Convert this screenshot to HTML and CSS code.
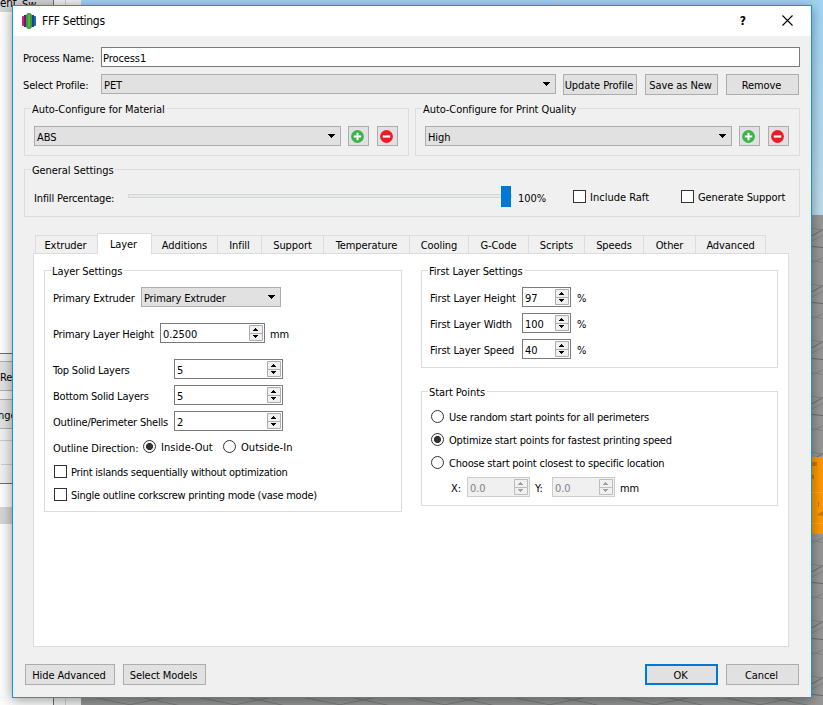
FILE: index.html
```
<!DOCTYPE html>
<html lang="en">
<head>
<meta charset="utf-8">
<title>FFF Settings</title>
<link rel="stylesheet" href="styles.css">
</head>
<body>
<svg width="0" height="0" class="defs">
  <symbol id="plus" viewBox="0 0 14 14"><circle cx="7" cy="7" r="6.900" fill="#39b54a"/><path d="M7 3v8M3 7h8" stroke="#fff" stroke-width="2.2"/></symbol>
  <symbol id="minus" viewBox="0 0 14 14"><circle cx="7" cy="7" r="6.900" fill="#ed1c24"/><path d="M3 7h8" stroke="#fff" stroke-width="2.4"/></symbol>
  <symbol id="down" viewBox="0 0 7 4"><path d="M0 0h7v1h-1v1h-1v1h-1v1h-1v-1h-1v-1h-1v-1h-1z" shape-rendering="crispEdges"/></symbol>
  <symbol id="arrows" viewBox="0 0 14 16"><path d="M.5.5h13v15h-13zM1 8.5h12" fill="#f0f0f0" stroke="#adadad"/><path d="M4 6h5v-1h-1v-1h-1v-1h-1v1h-1v1h-1zM4 10h5v1h-1v1h-1v1h-1v-1h-1v-1h-1z" fill="currentColor" shape-rendering="crispEdges"/></symbol>
</svg>

<svg class="scene" width="823" height="705" viewBox="0 0 823 705">
  <defs>
    <linearGradient id="sky" x1="0" y1="0" x2="0" y2="1"><stop offset="0" stop-color="#a2d5f5"/><stop offset="1" stop-color="#bedcec"/></linearGradient>
    <pattern id="grid" width="44" height="56" patternUnits="userSpaceOnUse" x="800" y="216"><path d="M0 31L44 9M0 53L44 31M0 10L44 18M0 42L44 51" stroke="#848484" fill="none"/><path d="M0 27L44 1M0 29L44 34" stroke="#6a6a6a" fill="none"/></pattern>
    <pattern id="floor" width="105" height="24" patternUnits="userSpaceOnUse" x="81" y="695"><path d="M0 0L105 21M0 20L105 -2M50 0L105 12" stroke="#7c7c7c" fill="none"/></pattern>
  </defs>
  <path fill="#fcfcfc" d="M0 0h81v705H0z"/>
  <path fill="url(#sky)" d="M81 0h742v216H81z"/>
  <path fill="#979797" d="M81 215h742v490H81z"/>
  <path fill="url(#grid)" d="M812 216h11v489h-11z"/>
  <path fill="url(#floor)" d="M81 698h742v7H81z"/>
  <path fill="#f1f1f1" d="M54 0h27v5H54zM54 698h27v7H54z"/>
  <path fill="#d5d5d5" d="M0 0h53v12H0zM0 507h12v17H0z"/>
  <path fill="#f0f0f0" d="M0 353h12v130H0z"/>
  <path stroke="#6d6d6d" d="M53.500 0v5M53.500 698v7M0 353.500h12M0 483.500h12"/>
  <path stroke="#ccc" d="M65.500 0v5M65.500 698v7M0 440.500h12M1 464.500h11M557.500 0v5"/>
  <path fill="#e1e1e1" stroke="#adadad" d="M-1 361.500h14v29H-1zM-1 399.500h14v29H-1z"/>
  <path fill="#f90" d="M812 457h11v77h-11z"/>
  <path fill="#c87900" d="M812 462h5v4h-5zM812 475h2v4h-2zM818 502h1v5h-1zM817 515l6-4v5z"/>
  <path stroke="#ffa91b" d="M812 492.500h11M812 523.500h11"/>
  <text x="0" y="7" font-size="11.500">ent</text>
  <text x="22" y="8">Sw</text>
  <text x="0" y="381">Re</text>
  <text x="-2" y="419">nge</text>
</svg>

<main class="dialog">
  <header class="titlebar">
    <svg class="logo" width="14" height="16" viewBox="0 0 14 16"><rect x="0" y="3" width="3" height="10" rx="1" fill="#c52379"/><rect x="2" y="2" width="2" height="12" fill="#5c2468"/><rect x="11" y="3" width="3" height="10" rx="1" fill="#2463c0"/><rect x="10" y="2" width="2" height="12" fill="#174680"/><rect x="4" y="0" width="6" height="16" rx="3" fill="#3d9b3b"/><path d="M7 1.500v13" stroke="#58b04a" stroke-width="2"/></svg>
    <h1>FFF Settings</h1>
    <span class="help">?</span>
    <svg class="close" width="11" height="11" viewBox="0 0 11 11"><path d="M.5.5l10 10M10.500.5l-10 10" stroke="#000" stroke-width="1.100"/></svg>
  </header>

  <section class="top">
    <label class="toplabel">Process Name:</label><div class="field name">Process1</div>
  </section>
  <section class="top profile">
    <label class="toplabel">Select Profile:</label>
    <div class="select grow"><span>PET</span><svg width="7" height="4"><use href="#down"/></svg></div>
    <button class="btn update">Update Profile</button><button class="btn">Save as New</button><button class="btn">Remove</button>
  </section>

  <section class="pair">
    <div class="group auto">
      <h2>Auto-Configure for Material</h2>
      <div class="line">
        <div class="select grow"><span>ABS</span><svg width="7" height="4"><use href="#down"/></svg></div>
        <button class="iconbtn"><svg width="13" height="13"><use href="#plus"/></svg></button><button class="iconbtn"><svg width="13" height="13"><use href="#minus"/></svg></button>
      </div>
    </div>
    <div class="group auto">
      <h2>Auto-Configure for Print Quality</h2>
      <div class="line">
        <div class="select grow"><span>High</span><svg width="7" height="4"><use href="#down"/></svg></div>
        <button class="iconbtn"><svg width="13" height="13"><use href="#plus"/></svg></button><button class="iconbtn"><svg width="13" height="13"><use href="#minus"/></svg></button>
      </div>
    </div>
  </section>

  <section class="group general">
    <h2>General Settings</h2>
    <div class="line">
      <label class="infill">Infill Percentage:</label>
      <div class="slider"><i></i></div>
      <span class="pct">100%</span>
      <label class="opt raft"><i class="check"></i>Include Raft</label>
      <label class="opt support"><i class="check"></i>Generate Support</label>
    </div>
  </section>

  <nav class="tabs">
    <span class="tab w64">Extruder</span><span class="tab active">Layer</span><span class="tab w66">Additions</span><span class="tab w44">Infill</span><span class="tab w62">Support</span><span class="tab w86">Temperature</span><span class="tab w59">Cooling</span><span class="tab w60">G-Code</span><span class="tab w56">Scripts</span><span class="tab w59">Speeds</span><span class="tab w52">Other</span><span class="tab w70">Advanced</span>
  </nav>

  <section class="panel">
    <div class="group layer">
      <h2>Layer Settings</h2>
      <div class="line"><label class="lab88">Primary Extruder</label><div class="select primary"><span>Primary Extruder</span><svg width="7" height="4"><use href="#down"/></svg></div></div>
      <div class="line height"><label class="lab107">Primary Layer Height</label><div class="field spin w105">0.2500<svg width="14" height="16"><use href="#arrows"/></svg></div><span class="unit">mm</span></div>
      <div class="line gap16"><label class="lab121">Top Solid Layers</label><div class="field spin w109">5<svg width="14" height="16"><use href="#arrows"/></svg></div></div>
      <div class="line gap6"><label class="lab121">Bottom Solid Layers</label><div class="field spin w109">5<svg width="14" height="16"><use href="#arrows"/></svg></div></div>
      <div class="line gap6"><label class="lab121">Outline/Perimeter Shells</label><div class="field spin w109">2<svg width="14" height="16"><use href="#arrows"/></svg></div></div>
      <div class="line direction"><label class="lab90">Outline Direction:</label><label class="opt inside"><i class="radio on"></i>Inside-Out</label><label class="opt"><i class="radio"></i>Outside-In</label></div>
      <div class="line gap5"><label class="opt"><i class="check"></i>Print islands sequentially without optimization</label></div>
      <div class="line gap3"><label class="opt"><i class="check"></i>Single outline corkscrew printing mode (vase mode)</label></div>
    </div>
    <div class="right">
      <div class="group first">
        <h2>First Layer Settings</h2>
        <div class="line"><label class="lab92">First Layer Height</label><div class="field spin w49">97<svg width="14" height="16"><use href="#arrows"/></svg></div><span class="unit">%</span></div>
        <div class="line gap6"><label class="lab92">First Layer Width</label><div class="field spin w49">100<svg width="14" height="16"><use href="#arrows"/></svg></div><span class="unit">%</span></div>
        <div class="line gap6"><label class="lab92">First Layer Speed</label><div class="field spin w49">40<svg width="14" height="16"><use href="#arrows"/></svg></div><span class="unit">%</span></div>
      </div>
      <div class="group start">
        <h2>Start Points</h2>
        <div class="line"><label class="opt"><i class="radio"></i>Use random start points for all perimeters</label></div>
        <div class="line gap3"><label class="opt"><i class="radio on"></i>Optimize start points for fastest printing speed</label></div>
        <div class="line gap3"><label class="opt"><i class="radio"></i>Choose start point closest to specific location</label></div>
        <div class="line coords"><label class="axis">X:</label><div class="field spin off">0.0<svg width="14" height="16"><use href="#arrows"/></svg></div><label class="axis y">Y:</label><div class="field spin off">0.0<svg width="14" height="16"><use href="#arrows"/></svg></div><span class="unit">mm</span></div>
      </div>
    </div>
  </section>

  <footer>
    <button class="btn hide">Hide Advanced</button><button class="btn models">Select Models</button>
    <button class="btn ok">OK</button><button class="btn">Cancel</button>
  </footer>
</main>
</body>
</html>
```
FILE: styles.css
```
* { box-sizing: border-box; }
body, h1, h2 { margin: 0; font-weight: normal; }
body {
  width: 823px; height: 705px; overflow: hidden; position: relative;
  font: 11px/16px "DejaVu Sans Condensed", "DejaVu Sans", sans-serif;
  font-stretch: condensed; color: #000; letter-spacing: -.08px;
}
svg { display: block; flex: none; }
.defs { position: absolute; }
.scene { position: absolute; left: 0; top: 0; }

.dialog {
  position: absolute; left: 12px; top: 5px; width: 800px; height: 693px;
  border: 1px solid #0c97ea; background: #f0f0f0;
  box-shadow: 0 2px 12px rgba(0, 0, 0, .4);
}
.titlebar { display: flex; align-items: center; height: 30px; background: #fff; padding: 0 18px 0 9px; }
.logo { margin-bottom: 1px; }
h1 { font-size: 12px; margin-left: 6px; flex: 1; white-space: nowrap; letter-spacing: -.3px; }
.help { font-size: 12px; margin-right: 36px; font-weight: bold; }
.close { margin-bottom: 2px; }

button, .field, .select { font: inherit; letter-spacing: inherit; color: #000; white-space: nowrap; }
label, h2, span { white-space: nowrap; }
.top { display: flex; height: 20px; margin: 11px 11px 0 10px; align-items: flex-start; }
.profile { margin-top: 7px; margin-right: 12px; height: 21px; }
.toplabel { width: 78px; padding-top: 4px; flex: none; letter-spacing: -.15px; }
.field { height: 20px; border: 1px solid #7a7a7a; background: #fff; padding: 3px 0 0 2px; }
.name { flex: 1; padding-left: 1px; }
.select {
  display: flex; height: 20px; background: #e1e1e1; border: 1px solid #adadad;
  padding: 3px 5px 0 2px; justify-content: space-between;
}
.select svg { margin-top: 4px; }
.grow { flex: 1; }
.btn { height: 21px; width: 73px; background: #e1e1e1; border: 1px solid #adadad; padding: 2px 2px 0 0; margin-left: 8px; flex: none; text-align: center; }
.update { width: 74px; margin-left: 7px; }

.group { border: 1px solid #dcdcdc; }
h2 { width: fit-content; height: 14px; margin: -7px 0 0 6px; padding: 0 2px 0 1px; font-size: 11px; line-height: 16px; background: #f0f0f0; }
.panel h2 { background: #fff; }
.line { display: flex; height: 20px; }
.line > label, .unit, .pct { padding-top: 4px; flex: none; }

.pair { display: flex; gap: 6px; margin: 13px 11px 0; }
.auto { flex: 1; height: 48px; }
.auto .line { margin: 10px 10px 0 9px; }
.iconbtn { width: 21px; height: 20px; background: #e1e1e1; border: 1px solid #adadad; padding: 3px 4px 2px 2px; margin-left: 7px; flex: none; }
.iconbtn + .iconbtn { margin-left: 8px; }

.general { height: 48px; margin: 13px 11px 0; }
.general .line { margin: 10px 0 0 8px; }
.infill { width: 95px; padding-left: 1px; letter-spacing: -.15px; }
.slider { width: 384px; height: 4px; margin-top: 7px; border: 1px solid #d6d6d6; background: #e7eaea; position: relative; }
.slider i { position: absolute; right: 0; top: -9px; width: 10px; height: 21px; background: #0078d7; }
.pct { width: 61px; padding-left: 6px; }
.opt { display: flex; }
.opt i { flex: none; width: 13px; height: 13px; border: 1px solid #333; background: #fff; margin: 0 4px 0 0; }
.general .opt { padding-top: 3px; letter-spacing: 0; }
.general .support { letter-spacing: -.08px; }
.raft { width: 108px; }
.opt .radio { border-radius: 50%; margin-right: 5px; }
.opt .on { background: radial-gradient(circle, #333 3.200px, #fff 3.900px); }

.tabs { display: flex; align-items: flex-end; height: 20px; margin: 16px 0 0 22px; }
.tab { height: 18px; border: 1px solid #dcdcdc; border-bottom: 0; border-left: 0; text-align: center; padding: 2px 0 0; }
.tab:first-child { border-left: 1px solid #dcdcdc; padding-right: 2px; }
.tab.active { width: 55px; height: 21px; margin: 0 0 -1px -1px; background: #fff; border-left: 1px solid #dcdcdc; position: relative; padding-top: 3px; padding-right: 2px; }
.w64 { width: 63px; } .w66 { width: 66px; } .w44 { width: 44px; } .w62 { width: 62px; }
.w86 { width: 86px; } .w59 { width: 59px; } .w60 { width: 60px; } .w56 { width: 56px; }
.w52 { width: 52px; } .w70 { width: 70px; }

.panel { display: flex; gap: 19px; width: 756px; height: 394px; margin-left: 20px; padding: 16px 10px; border: 1px solid #dcdcdc; background: #fff; }
.layer { width: 358px; height: 242px; padding-left: 8px; }
.layer h2 { margin-left: -2px; }
.layer h2 + .line, .first h2 + .line { margin-top: 9px; }
.lab88 { width: 88px; } .lab107 { width: 107px; } .lab121 { width: 121px; } .lab90 { width: 90px; } .lab92 { width: 92px; }
.lab107, .lab121 { letter-spacing: -.2px; }
.lab88, .primary { letter-spacing: -.15px; }
.primary { width: 140px; }
.height, .gap16 { margin-top: 16px; }
.gap6 { margin-top: 6px; } .gap5 { margin-top: 5px; } .gap3 { margin-top: 3px; }
.spin { display: flex; justify-content: space-between; flex: none; }
.spin svg { margin: -2px 1px 0 0; }
.w105 { width: 105px; } .w109 { width: 109px; } .w49 { width: 49px; }
.unit { margin-left: 5px; }
.first .unit { margin-left: 6px; }
.panel .opt { padding-top: 3px; letter-spacing: -.26px; }
.direction { margin-top: 6px; }
.panel .direction .opt { letter-spacing: .05px; }
.inside { width: 80px; }
.layer .gap5 .opt, .layer .gap3 .opt { padding-left: 1px; }

.right { width: 357px; }
.first { height: 98px; padding-left: 8px; }
.start { height: 115px; margin-top: 23px; padding-left: 9px; }
.first h2 { margin-left: -2px; }
.start h2 { margin-left: -3px; }
.start h2 + .line { margin-top: 8px; }
.panel .start .opt { letter-spacing: -.2px; }
.coords { margin: 4px 0 0 20px; }
.axis { width: 16px; }
.axis.y { width: 17px; margin-left: 5px; }
.off { width: 63px; border-color: #ccc; background: #f0f0f0; color: #838383; }
.off svg { opacity: .75; }

footer { display: flex; margin: 17px 12px 0; }
.hide { width: 90px; margin-left: 0; }
.models { width: 83px; }
.ok { margin-left: auto; border: 2px solid #0078d7; }
```
